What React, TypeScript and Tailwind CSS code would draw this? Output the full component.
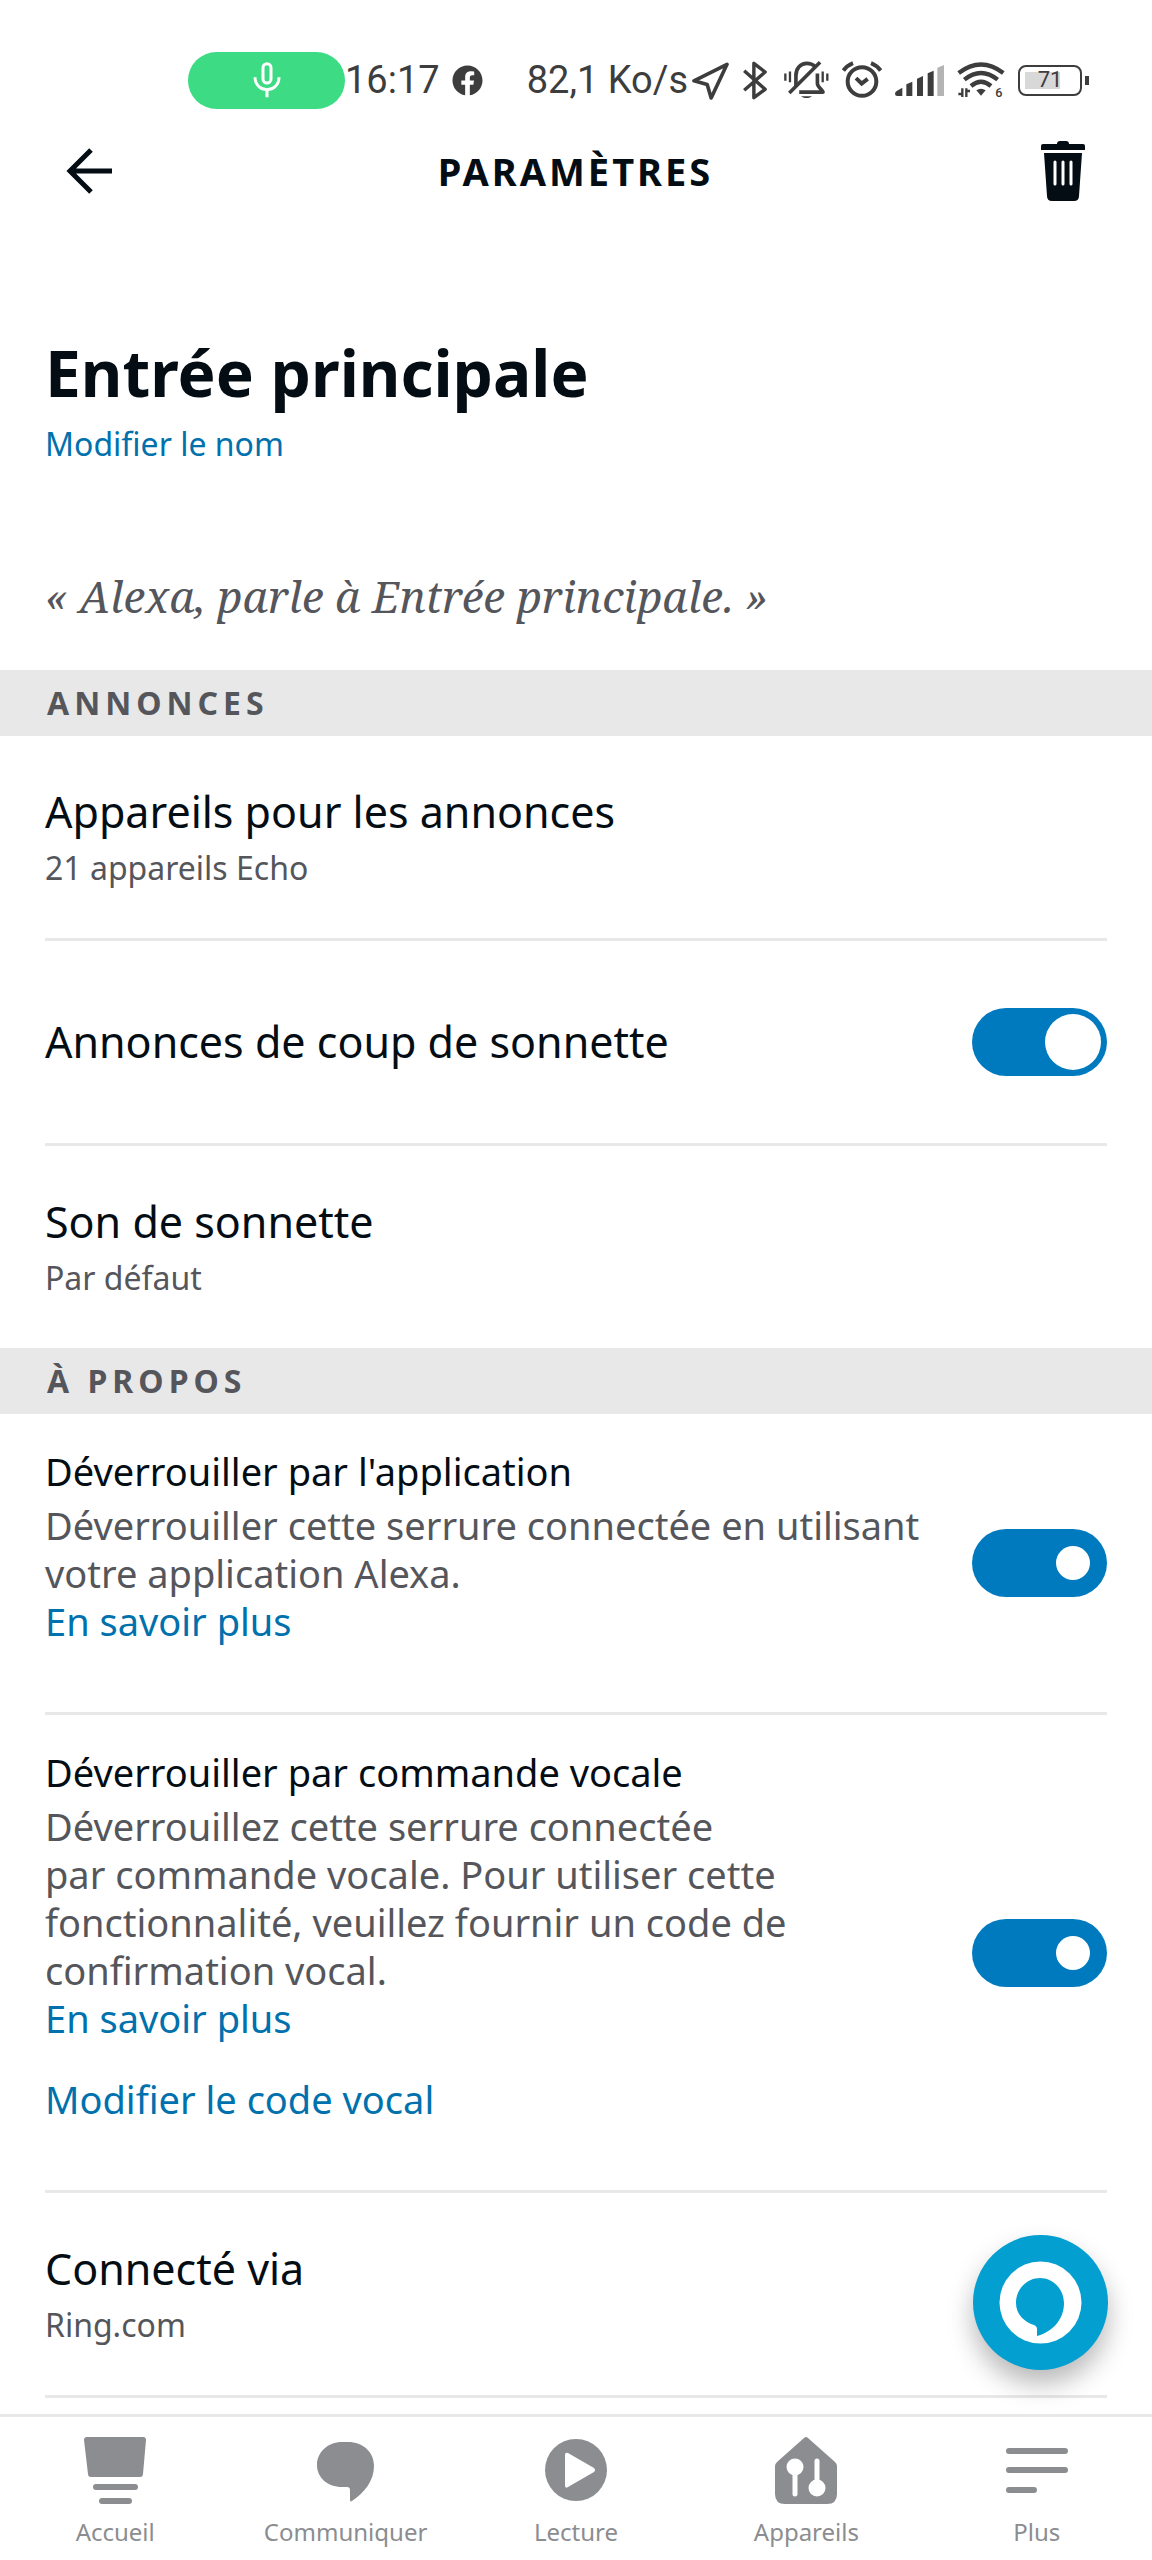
import { useState, type ReactNode } from 'react';
import { FaFacebook } from 'react-icons/fa';

const INK = '#3d3d3d';
const NAV = '#8b8d90';

function StatusBar() {
    return (
        <div className="h-[120px] pt-10 pl-[188px] pr-[63px] flex items-center font-['Roboto',sans-serif] text-[38px] leading-[40px] text-[#3d3d3d] whitespace-nowrap">
            <div className="w-[157px] h-[57px] rounded-full bg-[#3ddc84] flex items-center justify-center">
                <svg width="28" height="36" viewBox="0 0 84 108" fill="none" stroke="#fff" strokeWidth="9">
                    <rect x="30" y="5" width="24" height="58" rx="12" />
                    <path d="M6 46c0 22 16 37 36 37s36-15 36-37M42 83v23" />
                </svg>
            </div>
            <span>16:17</span>
            <FaFacebook size={31} className="ml-3" />

            <div className="ml-auto flex items-center gap-[13px]">
                <div className="flex items-center gap-1">
                    <span>82,1 Ko/s</span>
                    <svg width="37" height="39" viewBox="0 0 112 118" fill="none" stroke={INK} strokeWidth="11" strokeLinejoin="round">
                        <path d="M106 10 6 60l40 11 12 41z" />
                    </svg>
                </div>
                <svg className="mr-1" width="25" height="41" viewBox="0 0 80 122" fill="none" stroke={INK} strokeWidth="11" strokeLinejoin="round">
                    <path d="M7 30l67 59-36 27V6l36 28L7 92" />
                </svg>
                <svg width="45" height="39" viewBox="0 0 136 118" fill="none" stroke={INK} strokeWidth="11">
                    <path d="M109 4 16 97" />
                    <path d="M36 76V44c0-22 14-37 33-37 10 0 18 3 24 9" />
                    <path d="M101 38v30c0 10 14 18 17 26H46" strokeLinejoin="round" />
                    <path d="M52 107h32c-4 7-28 7-32 0z" fill={INK} stroke="none" />
                    <path d="M4 38v22M18 32v32M117 32v32M131 38v22" strokeWidth="7" />
                </svg>
                <svg width="40" height="38" viewBox="0 0 120 113" fill="none" stroke={INK} strokeWidth="12">
                    <circle cx="60" cy="61" r="43" />
                    <path d="M42 51l17 16 18-14" />
                    <path d="M4 28Q15 13 33 6M116 28Q105 13 87 6" />
                </svg>
                <svg width="49" height="31" viewBox="0 0 147 93" fill={INK}>
                    <path d="M22 68v25H7q-7 0-7-7 0-5 5-8zM34 58l18-8v43H34zM66 41l18-8v60H66zM98 25l18-8v76H98z" />
                    <path d="M127 8l20-8v93h-20z" fill="#b4b4b4" />
                </svg>
                <svg width="48" height="42" viewBox="0 -6 144 126" fill="none" stroke={INK} strokeWidth="13">
                    <path d="M5 36Q72-15 139 36M22 56Q72 16 122 56M42 75Q72 50 102 75" />
                    <path d="M58 88q14-10 28 0L72 104z" fill={INK} stroke="none" />
                    <path d="M16 82v26M28 82v26M4 99h12M28 90h11" strokeWidth="7" />
                    <text x="115" y="109" fill={INK} stroke="none" fontFamily="Roboto" fontSize="38" fontWeight="500">6</text>
                </svg>
                <div className="flex items-center gap-[3px]">
                    <div className="w-[64px] h-[31px] rounded-[8px] border-2 border-[#3d3d3d] p-[5px]">
                        <div className="h-full bg-linear-to-r from-[#d8d8d8] from-70% to-transparent to-70% flex items-center justify-center text-[22px] leading-[22px]">
                            71
                        </div>
                    </div>
                    <div className="w-[4px] h-[9px] bg-[#3d3d3d]" />
                </div>
            </div>
        </div>
    );
}

function Header() {
    return (
        <header className="h-[102px] pl-[66px] pr-[67px] grid grid-cols-[48px_1fr_48px] items-center">
            <button aria-label="Retour">
                <svg width="48" height="48" viewBox="0 0 48 48" fill="none" stroke="#040d14" strokeWidth="5">
                    <path d="M46 24H5M25 3 4 24l21 21" />
                </svg>
            </button>
            <h2 className="text-center text-[38px] leading-[48px] font-bold tracking-[3px]">PARAMÈTRES</h2>
            <button aria-label="Supprimer" className="justify-self-end">
                <svg width="44" height="60" viewBox="0 0 44 60" fill="#040d14">
                    <path d="M16 3q0-3 3-3h6q3 0 3 3h14q2 0 2 2v4H0V5q0-2 2-2z" />
                    <path d="M3 12h38l-3 43q0 5-5 5H11q-5 0-5-5z" />
                    <path d="M14 21v22M22 21v22M30 21v22" stroke="#fff" strokeWidth="3" strokeLinecap="round" />
                </svg>
            </button>
        </header>
    );
}

function Section({ title }: { title: string }) {
    return (
        <h3 className="bg-[#e8e8e8] px-[47px] h-[66px] flex items-center text-[32px] leading-[40px] font-bold tracking-[5px] text-[#55565b]">
            {title}
        </h3>
    );
}

function Row({ title, sub }: { title: string; sub: string }) {
    return (
        <div className="pt-[48px] pb-[50px] flex flex-col gap-2">
            <div className="text-[43px] leading-[56px]">{title}</div>
            <div className="text-[32px] leading-[40px] text-[#55565b]">{sub}</div>
        </div>
    );
}

function Toggle({ id, small }: { id: string; small?: boolean }) {
    const [on, setOn] = useState(true);
    return (
        <input
            id={id}
            type="checkbox"
            role="switch"
            checked={on}
            onChange={() => setOn(!on)}
            className={`appearance-none shrink-0 w-[135px] h-[68px] rounded-full bg-[#8b8d90] checked:bg-[#007abf] before:block before:rounded-full before:bg-white ${small
                ? 'before:size-[34px] before:mt-[17px] before:ml-[17px] checked:before:ml-[84px]'
                : 'before:size-[56px] before:mt-[6px] before:ml-[6px] checked:before:ml-[73px]'
                }`}
        />
    );
}

function UnlockRow({ id, title, text, extra }: { id: string; title: string; text: string; extra?: string }) {
    return (
        <div className="pt-[33px] pb-[67px] flex flex-col relative text-[38px] leading-[48px]">
            <label htmlFor={id}>{title}</label>
            <p className="mt-[6px] w-5/6 text-[#55565b]">{text}</p>
            <a href="#" className="self-start text-[#0071ad]">En savoir plus</a>
            {extra && <a href="#" className="self-start mt-[33px] text-[#0071ad]">{extra}</a>}
            <div className="absolute inset-y-0 right-0 flex items-center">
                <Toggle id={id} small />
            </div>
        </div>
    );
}

const tabs: { label: string; icon: ReactNode }[] = [
    {
        label: 'Accueil',
        icon: (
            <path d="M8 3h56q3 0 3 3l-3 34q0 3-3 3H12q-3 0-3-3L5 6q0-3 3-3zM17 50h39a3 3 0 0 1 0 6H17a3 3 0 0 1 0-6zM23 64h27a3 3 0 0 1 0 6H23a3 3 0 0 1 0-6z" />
        ),
    },
    {
        label: 'Communiquer',
        icon: <path d="M32 8h6c15 0 26 10 26 24 0 15-10 27-22 35-1 1-2 0-2-1V56c0-2-1-3-3-3h-5C18 53 7 44 7 31 7 18 18 8 32 8z" />,
    },
    {
        label: 'Lecture',
        icon: (
            <>
                <circle cx="36" cy="36" r="31" />
                <path d="M25 21q0-3 3-2l26 15q2 2 0 4L28 53q-3 2-3-2z" fill="#fff" />
            </>
        ),
    },
    {
        label: 'Appareils',
        icon: (
            <>
                <path d="M34 4q2-2 4 0l27 24q2 2 2 4v28q0 10-10 10H15Q5 70 5 60V32q0-2 2-4z" />
                <g fill="#fff" stroke="#fff" strokeWidth="5" strokeLinecap="round">
                    <circle cx="25" cy="33" r="6" />
                    <path d="M25 34v26M47 27v26" />
                    <circle cx="47" cy="54" r="6" />
                </g>
            </>
        ),
    },
    {
        label: 'Plus',
        icon: <path d="M8 17h56M8 36h56M8 56h25" stroke={NAV} strokeWidth="6" strokeLinecap="round" />,
    },
];

function TabBar() {
    return (
        <nav className="sticky bottom-0 mt-auto h-[146px] pt-[17px] bg-white border-t-[3px] border-[#e8e8e8] grid grid-cols-5">
            {tabs.map(t => (
                <a key={t.label} href="#" className="flex flex-col items-center gap-[10px] text-[24px] leading-[32px] text-[#8b8d90]">
                    <svg width="72" height="72" viewBox="0 0 72 72" fill={NAV}>{t.icon}</svg>
                    {t.label}
                </a>
            ))}
        </nav>
    );
}

export default function App() {
    return (
        <div className="min-h-screen flex flex-col bg-white text-[#040d14] font-['Noto_Sans',sans-serif]">
            <StatusBar />
            <Header />

            <main>
                <div className="px-[45px] pt-[111px] pb-[44px]">
                    <h1 className="text-[64px] leading-[80px] font-bold">Entrée principale</h1>
                    <a href="#" className="block mt-[11px] text-[32px] leading-[40px] text-[#0071ad]">Modifier le nom</a>
                    <p className="mt-[102px] text-[44px] leading-[60px] italic text-[#55565b] font-['Noto_Serif',serif]">
                        « Alexa, parle à Entrée principale. »
                    </p>
                </div>

                <Section title="ANNONCES" />
                <div className="mx-[45px] divide-y-[3px] divide-[#e8e8e8]">
                    <Row title="Appareils pour les annonces" sub="21 appareils Echo" />
                    <div className="h-[205px] flex items-center justify-between">
                        <label htmlFor="ring" className="text-[43px] leading-[56px]">Annonces de coup de sonnette</label>
                        <Toggle id="ring" />
                    </div>
                    <Row title="Son de sonnette" sub="Par défaut" />
                </div>

                <Section title="À PROPOS" />
                <div className="mx-[45px] divide-y-[3px] divide-[#e8e8e8] border-b-[3px] border-[#e8e8e8]">
                    <UnlockRow
                        id="unlock-app"
                        title="Déverrouiller par l'application"
                        text="Déverrouiller cette serrure connectée en utilisant votre application Alexa."
                    />
                    <UnlockRow
                        id="unlock-voice"
                        title="Déverrouiller par commande vocale"
                        text={'Déverrouillez cette serrure connectée par\u00a0commande\u00a0vocale. Pour utiliser cette fonctionnalité, veuillez fournir un code de confirmation vocal.'}
                        extra="Modifier le code vocal"
                    />
                    <Row title="Connecté via" sub="Ring.com" />
                </div>
            </main>

            <button
                aria-label="Alexa"
                className="fixed right-[44px] bottom-[190px] size-[135px] rounded-full bg-[#049fd1] shadow-[0_14px_26px_rgba(0,0,0,0.28)]"
            >
                <svg width="135" height="135" viewBox="0 0 135 135">
                    <circle cx="67.5" cy="67.5" r="41" fill="#fff" />
                    <path d="M67 43c13 0 24 11 24 25 0 17-12 29-27 33v-7c0-2-1-3-3-4-10-3-18-11-18-22 0-14 11-25 24-25z" fill="#049fd1" />
                </svg>
            </button>

            <TabBar />
        </div>
    );
}
